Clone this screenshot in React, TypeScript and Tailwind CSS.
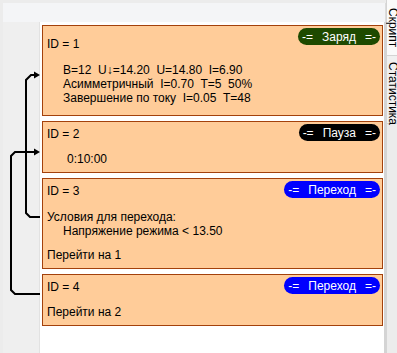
import React from "react";

type Badge = { label: string; bg: string };

const font = { fontFamily: '"Liberation Sans", Arial, sans-serif' };

const Pill = ({ label, bg }: Badge) => (
  <div
    className={`absolute top-[2px] right-[2px] h-[17px] flex items-center gap-[9px] px-[4px] rounded-full text-white text-[12px] leading-[14px] whitespace-pre ${bg}`}
  >
    <span>-=</span>
    <span>{label}</span>
    <span>=-</span>
  </div>
);

const Card = ({
  badge,
  className,
  children,
}: {
  badge: Badge;
  className: string;
  children: React.ReactNode;
}) => (
  <div className={`relative border border-[#a3410c] bg-[#ffcc99] pl-[4px] ${className}`}>
    <Pill {...badge} />
    {children}
  </div>
);

// стрелки переходов между шагами
const Links = () => (
  <svg className="absolute left-0 top-0 pointer-events-none" width="60" height="353">
    <path d="M40 217 H30 L26 213 V80 L31 75 H37" fill="none" stroke="#000" strokeWidth="2" />
    <path d="M34 71.5 L40 75 L34 78.5 Z" fill="#000" />
    <path d="M40 294 H15 L11 290 V156 L15 152 H37" fill="none" stroke="#000" strokeWidth="2" />
    <path d="M34 148.5 L40 152 L34 155.5 Z" fill="#000" />
  </svg>
);

export default function App() {
  return (
    <div
      className="relative w-[397px] h-[353px] flex bg-[#ececec] overflow-hidden text-[12px] leading-[14px] text-black"
      style={font}
    >
      {/* основная область */}
      <div className="flex flex-col w-[386px] pl-[3px] pt-[3px]">
        <div className="h-[19px] bg-[#f4f5f7] border-r border-[#dcdcdc]" />
        <div className="flex flex-1">
          <div className="w-[37px] bg-[#efefef] border-r border-[#e2e2e2]" />
          <div className="flex-1 bg-white pt-[3px] pl-[2px] pr-[1px] flex flex-col gap-[5px] border-r-2 border-[#d4d4d4]">
            <Card badge={{ label: "Заряд", bg: "bg-[#1e4a00]" }} className="h-[91px] pt-[11px]">
              <div>ID = 1</div>
              <div className="mt-[12px] pl-[16px] whitespace-pre">
                <div>B=12  U↓=14.20  U=14.80  I=6.90</div>
                <div>Асимметричный  I=0.70  T=5  50%</div>
                <div>Завершение по току  I=0.05  T=48</div>
              </div>
            </Card>
            <Card badge={{ label: "Пауза", bg: "bg-black" }} className="h-[52px] pt-[5px]">
              <div>ID = 2</div>
              <div className="mt-[11px] pl-[20px]">0:10:00</div>
            </Card>
            <Card badge={{ label: "Переход", bg: "bg-[#0000ff]" }} className="h-[91px] pt-[5px]">
              <div>ID = 3</div>
              <div className="mt-[12px]">Условия для перехода:</div>
              <div className="pl-[16px]">Напряжение режима &lt; 13.50</div>
              <div className="mt-[10px]">Перейти на 1</div>
            </Card>
            <Card badge={{ label: "Переход", bg: "bg-[#0000ff]" }} className="h-[52px] pt-[5px]">
              <div>ID = 4</div>
              <div className="mt-[11px]">Перейти на 2</div>
            </Card>
          </div>
        </div>
      </div>

      {/* вкладки справа */}
      <div className="w-[11px] flex flex-col overflow-hidden">
        <div className="h-[56px] bg-[#fafafa] border-l border-b border-[#d4d4d4] pt-[8px]">
          <div className="[writing-mode:vertical-rl] -ml-[1px] w-[14px] text-[12px] leading-[14px]">Скрипт</div>
        </div>
        <div className="h-[68px] bg-[#f0f0f0] border-l border-b border-[#d4d4d4] pt-[6px]">
          <div className="[writing-mode:vertical-rl] -ml-[1px] w-[14px] text-[12px] leading-[14px]">Статистика</div>
        </div>
        <div className="flex-1 border-l border-[#d4d4d4]" />
      </div>

      <Links />
    </div>
  );
}
